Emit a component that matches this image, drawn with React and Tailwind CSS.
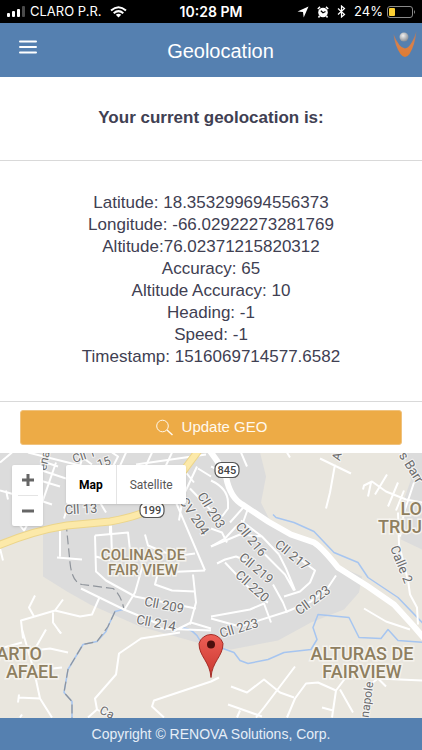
import { useState } from "react"

const geolocation = [
  "Latitude: 18.353299694556373",
  "Longitude: -66.02922273281769",
  "Altitude:76.02371215820312",
  "Accuracy: 65",
  "Altitude Accuracy: 10",
  "Heading: -1",
  "Speed: -1",
  "Timestamp: 1516069714577.6582",
]

// small streets, stroke only
const streets = [
  "M0 10 L12 0 M0 38 L22 44 M6 38 L8 47",
  "M40 8 L58 14 M28 0 L100 18 M40 28 L60 34 M56 10 L38 62 M40 48 L52 52 M42 18 L66 26",
  "M64 66 L84 0 M76 0 L92 12 M112 0 L118 4 L108 24 M126 0 L108 40 M152 0 L140 26 M172 0 L158 30",
  "M100 50 L106 60 M118 14 L180 32 M136 12 L206 2",
  "M197 14 L183 44 L179 68 M198 16 L211 24 M190 36 L211 58 M176 50 L205 118 M186 20 L194 30",
  "M211 28 Q228 36 228 50 L228 56 L222 64 M211 14 L224 20 M230 70 L246 52 M248 56 L243 70 L236 74 L225 86 L211 94",
  "M211 76 L222 80 L227 90 M241 68 L262 84 L279 102 M211 94 L240 82 L262 84",
  "M241 0 L247 14 M287 0 L290 5 M320 6 L351 21 M335 12 L330 40 L326 56",
  "M363 37 L364 33 L372 29 L386 39 L406 47 L422 50 M371 30 L368 44 M387 22 L375 42 M398 30 L388 54 M404 38 L396 58 M414 30 L404 60 L400 84",
  "M398 60 L399 92 L408 128 L410 142 L417 155 L418 172",
  "M0 96 L3 108 M20 73 L24 78 L28 71 M60 78 L60 104 M57 105 L82 107",
  "M110 73 L110 82 M95 83 L128 80 L130 98 L146 104 M95 83 L96 119 L106 128 L135 144 M96 104 L110 108 M111 73 L112 104",
  "M145 82 L148 93 L165 100 L180 103 L195 101 M143 112 L135 140 L124 158 M160 112 L155 132 L172 138 L195 139 M160 120 L205 118 M193 122 L196 150 L190 172",
  "M81 136 L124 157 L160 172 M99 146 L92 162 L80 164 L55 158 L21 168 L23 186 M55 158 L63 147 M53 160 L53 170 L61 181 M35 143 L29 155 L34 164",
  "M135 144 L196 156 M160 176 L211 178 M173 179 L191 170 M191 170 L211 176",
  "M217 111 L225 107 L236 104 L246 108 M225 110 L258 145 L268 150 M265 102 L285 122 L294 138 M273 132 L283 150 L287 160 M279 102 L286 116 L295 138",
  "M294 102 L315 118 L310 130 L300 139 L284 144 M211 164 L250 157 L264 151 L271 170 M211 166 L240 174 L287 159 L311 149 L328 135 L336 123",
  "M364 156 L386 169 L410 177",
  "M22 177 L34 218 L40 246 L52 265 M0 196 L22 190 M46 177 L34 198 L50 196 L68 200 M34 218 L62 215 M18 245 L40 246 M19 242 L18 250 M20 265 L22 262 M58 177 L61 181",
  "M180 180 L141 186 L119 201 L116 222 L95 246 L97 257 L88 265 M97 257 L106 262",
  "M219 225 L211 229 L154 248 L152 254 L164 265",
  "M231 234 L247 240 L264 227 L280 240 L294 245 M295 214 L264 255 L256 265 M228 252 L262 264 M240 258 L237 265",
  "M287 265 L295 246 L306 231 L318 230 L336 238 L345 226 M336 238 L332 265 M322 255 L333 258 M340 237 L353 260 M365 236 L378 226 L422 228 M378 226 L386 234",
]

const streetLabels = [
  { text: "Cll 13", x: 81, y: 61, angle: -3 },
  { text: "Cll 1", x: 84, y: 7, angle: -18, size: 12 },
  { text: "15", x: 104, y: 14, angle: -20, size: 12 },
  { text: "ena", x: 44, y: 12, angle: -78, size: 12 },
  { text: "CV 204", x: 194, y: 68, angle: 56 },
  { text: "Cll 203", x: 211, y: 62, angle: 58 },
  { text: "Cll 216", x: 251, y: 91, angle: 50 },
  { text: "Cll 217", x: 292, y: 107, angle: 39 },
  { text: "Cll 219", x: 256, y: 120, angle: 40 },
  { text: "Cll 220", x: 252, y: 138, angle: 42 },
  { text: "Cll 223", x: 313, y: 152, angle: -36 },
  { text: "Cll 223", x: 239, y: 180, angle: -16 },
  { text: "Cll 209", x: 164, y: 157, angle: 11 },
  { text: "Cll 214", x: 156, y: 175, angle: 11 },
  { text: "Calle 2", x: 401, y: 116, angle: 68 },
  { text: "s Barr", x: 411, y: 19, angle: 58 },
  { text: "A", x: 337, y: 8, angle: -75, size: 12 },
  { text: "napole", x: 367, y: 251, angle: -82, size: 12 },
  { text: "Ca", x: 107, y: 264, angle: 25, size: 12 },
]

const areaLabels = [
  { text: "COLINAS DE", x: 143, y: 107 },
  { text: "FAIR VIEW", x: 143, y: 122 },
  { text: "LO", x: 422, y: 62, size: 18, anchor: "end" },
  { text: "TRUJ", x: 422, y: 80, size: 18, anchor: "end" },
  { text: "ARTO", x: 42, y: 207, size: 18, anchor: "end" },
  { text: "AFAEL", x: 58, y: 225, size: 18, anchor: "end" },
  { text: "ALTURAS DE", x: 362, y: 207, size: 18 },
  { text: "FAIRVIEW", x: 362, y: 225, size: 18 },
]

const StatusBar = () => (
  <div className="grid h-[23px] grid-cols-3 items-center bg-black px-1.5 font-[Inter,sans-serif] text-[13px] leading-none text-white">
    <div className="flex items-center gap-1 whitespace-nowrap">
      <svg width="20" height="12" viewBox="0 0 20 12" fill="currentColor" aria-hidden="true">
        <rect x="1" y="7" width="3" height="4" rx="1" />
        <rect x="6" y="5" width="3" height="6" rx="1" />
        <rect x="11" y="3" width="3" height="8" rx="1" />
        <rect x="16" y="0" width="3" height="11" rx="1" fill="#4a4a4a" />
      </svg>
      <span>CLARO P.R.</span>
      <svg className="ml-1 shrink-0" width="17" height="12" viewBox="0 0 17 12" fill="none" stroke="currentColor" strokeWidth="2" aria-hidden="true">
        <path d="M1 4.5 Q8.500 -2 16 4.500" />
        <path d="M3.700 7.200 Q8.500 3 13.300 7.200" />
        <path d="M8.500 11.500 L5.800 8.800 Q8.500 6.600 11.200 8.800 Z" fill="currentColor" stroke="none" />
      </svg>
    </div>
    <div className="text-center text-[14px] font-semibold whitespace-nowrap">10:28 PM</div>
    <div className="flex items-center justify-end gap-1">
      <svg width="12" height="12" viewBox="0 0 12 12" fill="currentColor" aria-hidden="true">
        <path d="M11.500 0.500 L6.700 11.500 L6 6 L0.500 5.500 Z" />
      </svg>
      <svg className="mx-1" width="12" height="12" viewBox="0 0 12 12" aria-hidden="true">
        <circle cx="6" cy="6.500" r="4.800" fill="#fff" />
        <path d="M0.800 3 L3 0.900 M11.200 3 L9 0.900 M2.500 10 L1.500 11.500 M9.500 10 L10.500 11.500" stroke="#fff" strokeWidth="1.500" />
        <path d="M3.800 4.800 L6 6.800 L8.500 5.500" stroke="#000" strokeWidth="1.200" fill="none" />
      </svg>
      <svg width="9" height="13" viewBox="0 0 9 13" fill="none" stroke="currentColor" strokeWidth="1.200" aria-hidden="true">
        <path d="M1 3.500 L7.500 9.500 L4.500 12 V1 L7.500 3.500 L1 9.500" />
      </svg>
      <span className="ml-1">24%</span>
      <svg width="29" height="12" viewBox="0 0 29 12" aria-hidden="true">
        <rect x="0.500" y="0.500" width="25" height="11" rx="2.500" fill="none" stroke="#8a8a8a" />
        <rect x="2" y="2" width="6" height="8" rx="1" fill="#fcd034" />
        <path d="M27 4 Q29 6 27 8 Z" fill="#8a8a8a" />
      </svg>
    </div>
  </div>
)

const Logo = () => (
  <svg width="24" height="28" viewBox="0 0 24 28" aria-label="RENOVA Solutions">
    <defs>
      <radialGradient id="ball" cx="0.4" cy="0.35" r="0.7">
        <stop offset="0" stopColor="#f1f1f1" />
        <stop offset="1" stopColor="#85898f" />
      </radialGradient>
      <linearGradient id="body" x1="0" x2="0" y1="0" y2="1">
        <stop offset="0" stopColor="#9b7a70" />
        <stop offset="0.500" stopColor="#d9804a" />
        <stop offset="1" stopColor="#e07c30" />
      </linearGradient>
    </defs>
    <path d="M0.500 4 Q6 18 12 18.500 Q18 18 23.500 1 Q22 15 16.500 24 Q12 30 7.500 24 Q2 16 0.500 4 Z" fill="url(#body)" />
    <circle cx="11" cy="7" r="4.500" fill="url(#ball)" />
  </svg>
)

const RouteShield = ({ x, y, text }) => (
  <g>
    <rect x={x - 12} y={y - 7} width="24" height="15" rx="6" fill="#fff" stroke="#555" strokeWidth="1.200" />
    <text x={x} y={y + 4} textAnchor="middle" fontSize="11" fontWeight="500" fill="#444">{text}</text>
  </g>
)

const StreetMap = () => (
  <svg
    className="absolute inset-0 h-full w-full font-[Roboto,sans-serif]"
    viewBox="0 0 422 266"
    preserveAspectRatio="xMidYMid slice"
    role="img"
    aria-label="Map of the current location"
  >
    <defs>
      <linearGradient id="pin" x1="0" x2="0" y1="0" y2="1">
        <stop offset="0" stopColor="#ee5f56" />
        <stop offset="1" stopColor="#c8372f" />
      </linearGradient>
    </defs>
    <rect width="422" height="266" fill="#e9e6de" />
    <path
      d="M0 0 H260 L266 24 L261 50 L271 70 L314 90 L338 113 L362 124 L359 140 L344 157 L311 170 L278 188 L231 197 L197 190 L140 174 L115 163 L90 152 L67 139 L43 124 V78 L0 90 Z"
      fill="#dcdcdc"
    />
    <path d="M404 0 H422 V97 L401 87 L404 47 L411 27 Z" fill="#dcdcdc" />

    <g fill="none" stroke="#a6c5f0" strokeWidth="1.500" strokeLinejoin="round">
      <path d="M273 62 L276 65 L294 70 L314 79 L334 100 L358 110 L368 125 L398 145 L424 172" />
      <path d="M182 175 Q195 177 200 188 Q208 198 223 196 L234 200 L240 208 L248 211 L268 207 L284 200 L311 197 L317 187 L313 175 L318 162 L349 165 L359 185 L381 186 L388 177 L398 188 L424 190" />
      <path d="M123 157 L115 159 L108 174 L106 179 L97 189 L83 192 L68 217 L64 240 L72 249 V266" />
    </g>
    <g fill="none" stroke="#8f949b" strokeWidth="1.200" strokeDasharray="9 4">
      <path d="M66 70 L70 110 Q72 130 82 132 L113 136 Q121 142 124 157" />
      <path d="M115 159 L108 174 L97 189 L83 192 L68 217 L64 240 L72 249 V266" />
    </g>

    <g fill="none" stroke="#fff" strokeWidth="2" strokeLinejoin="round">
      {streets.map((d) => <path key={d} d={d} />)}
    </g>
    <path
      d="M208 -4 Q222 14 226 24 Q230 46 244 53 L268 69 L291 82 L314 90 Q322 95 338 115 L368 134 L394 152 L414 174 L426 188"
      fill="none" stroke="#fff" strokeWidth="6"
    />
    <g fill="none">
      <path d="M-2 93 Q34 78 67 73 L110 69 Q150 62 162 48 Q182 20 200 -4" stroke="#ecd58a" strokeWidth="8" />
      <path d="M-2 93 Q34 78 67 73 L110 69 Q150 62 162 48 Q182 20 200 -4" stroke="#fce9a9" strokeWidth="6" />
    </g>

    <g fill="#6b6b6b" stroke="#f4f4f4" strokeWidth="2" paintOrder="stroke" textAnchor="middle">
      {streetLabels.map(({ text, x, y, angle, size = 13 }) => (
        <text key={`${text}-${x}`} x={x} y={y} fontSize={size} transform={`rotate(${angle} ${x} ${y - 4})`}>{text}</text>
      ))}
    </g>
    <g fill="#8f7f60" stroke="#f5f3ee" strokeWidth="3" paintOrder="stroke" fontWeight="500">
      {areaLabels.map(({ text, x, y, size = 15, anchor = "middle" }) => (
        <text key={text} x={x} y={y} fontSize={size} textAnchor={anchor}>{text}</text>
      ))}
    </g>
    <RouteShield x={227} y={17} text="845" />
    <RouteShield x={152} y={57} text="199" />

    <path
      d="M211 225 C210 209 199 204 199 191 A12.500 12.500 0 0 1 223 191 C223 204 212 209 211 225 Z"
      fill="url(#pin)" stroke="#a52c26"
    />
    <circle cx="211" cy="192" r="4" fill="#4d0f0d" />
  </svg>
)

const App = () => {
  const [mapType, setMapType] = useState("map")

  return (
    <div className="flex min-h-screen flex-col bg-white font-['Liberation_Sans',Arial,sans-serif] text-[#404052]">
      <StatusBar />
      <header className="grid h-[54px] grid-cols-[40px_1fr_40px] items-center bg-[#5580b0] pr-[5px] pl-4 text-white">
        <button type="button" aria-label="Open menu" className="mb-1.5 flex w-6 justify-center">
          <svg width="18" height="14" viewBox="0 0 18 14" stroke="currentColor" strokeWidth="2" strokeLinecap="round" aria-hidden="true">
            <path d="M1 1.500 H17 M1 7 H17 M1 12.500 H17" />
          </svg>
        </button>
        <h1 className="pt-0.5 pl-2 text-center text-[20px] leading-6">Geolocation</h1>
        <div className="mb-3 flex justify-end">
          <Logo />
        </div>
      </header>

      <main className="flex flex-1 flex-col">
        <h2 className="border-b border-[#d9d9d9] px-4 pt-[30px] pb-[31px] text-center text-[17px] leading-[22px] font-bold">
          Your current geolocation is:
        </h2>
        <div className="border-b border-[#d9d9d9] px-4 pt-[31px] pb-[33px] text-center text-[17px] leading-[22px]">
          {geolocation.map((line) => <p key={line}>{line}</p>)}
        </div>
        <div className="px-5 py-2">
          <button type="button" className="flex h-[35px] w-full items-center justify-center gap-2 rounded-[3px] border border-[#f0c27d] bg-[#edab46] text-[15px] text-[#fff9ee]">
            <svg width="19" height="18" viewBox="0 0 19 18" fill="none" stroke="currentColor" aria-hidden="true">
              <circle cx="7.500" cy="7" r="5.800" />
              <path d="M12 11 L17.500 16" strokeWidth="1.500" />
            </svg>
            Update GEO
          </button>
        </div>

        <section className="relative min-h-[200px] flex-1 overflow-hidden">
          <StreetMap />
          <div className="absolute top-3 left-3 flex w-[31px] flex-col items-center rounded-xs bg-white text-[#666] shadow">
            <button type="button" aria-label="Zoom in" className="flex h-[30px] w-full items-center justify-center">
              <svg width="12" height="12" viewBox="0 0 12 12" stroke="currentColor" strokeWidth="3" aria-hidden="true">
                <path d="M0 6 H12 M6 0 V12" />
              </svg>
            </button>
            <span className="h-px w-5 bg-[#e4e4e4]"></span>
            <button type="button" aria-label="Zoom out" className="flex h-[30px] w-full items-center justify-center">
              <svg width="12" height="12" viewBox="0 0 12 12" stroke="currentColor" strokeWidth="3" aria-hidden="true">
                <path d="M0 6 H12" />
              </svg>
            </button>
          </div>
          <div className="absolute top-3 left-[66px] flex h-[39px] rounded-xs bg-white font-[Roboto,sans-serif] text-[12px] text-[#565656] shadow">
            <button
              type="button"
              onClick={() => setMapType("map")}
              className={mapType === "map" ? "px-[13px] font-bold text-black" : "px-[13px]"}
            >
              Map
            </button>
            <button
              type="button"
              onClick={() => setMapType("satellite")}
              className={mapType === "satellite" ? "border-l border-[#e4e4e4] px-[13px] font-bold text-black" : "border-l border-[#e4e4e4] px-[13px]"}
            >
              Satellite
            </button>
          </div>
        </section>
      </main>

      <footer className="bg-[#5580b0] px-4 py-1.5 text-center text-[14px] leading-5 text-[#e6eef7]">
        Copyright © RENOVA Solutions, Corp.
      </footer>
    </div>
  )
}

export default App
